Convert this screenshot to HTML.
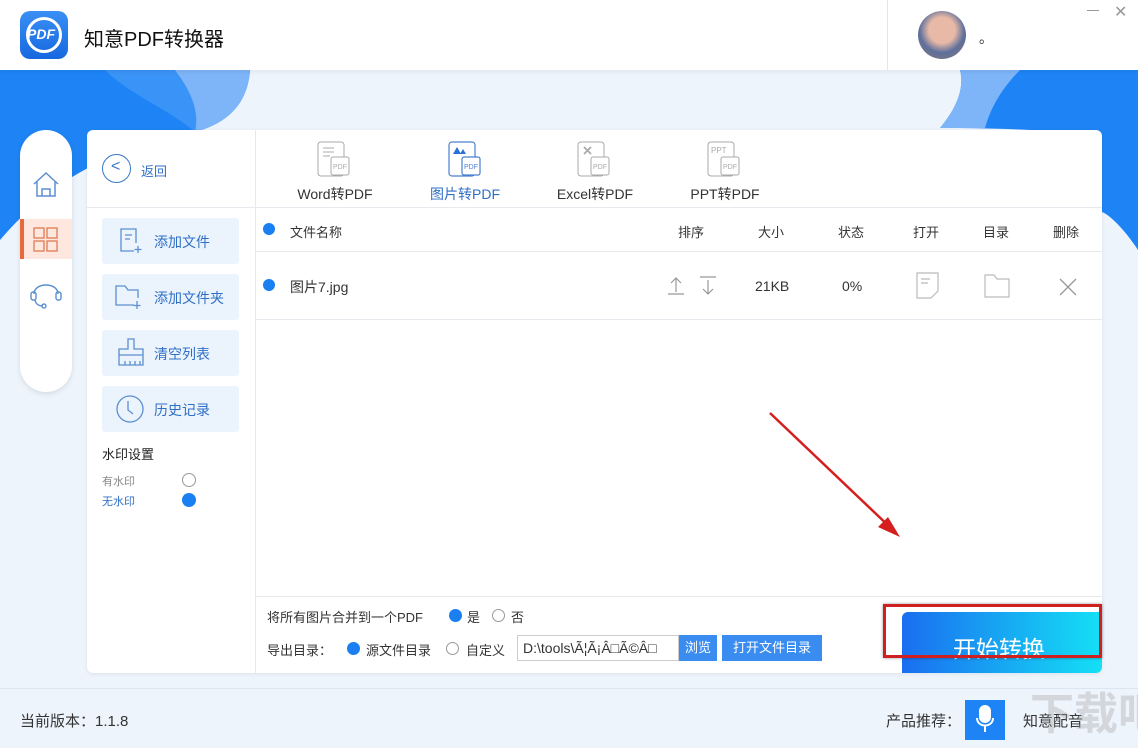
<!DOCTYPE html>
<html><head><meta charset="utf-8"><style>
*{margin:0;padding:0;box-sizing:border-box}
body{width:1138px;height:748px;overflow:hidden;background:#eef4fc;font-family:"Liberation Sans","Noto Sans CJK SC",sans-serif;position:relative;color:#333}
.abs{position:absolute;white-space:nowrap}
.hdr{left:0;top:0;width:1138px;height:70px;background:#fff;box-shadow:0 2px 4px rgba(0,0,0,.06)}
.t{font-size:13px}
.btn{left:102px;width:137px;height:46px;background:#ebf3fd;border-radius:3px;color:#2f6fc4;font-size:14px}
.btn span{position:absolute;left:52px;top:14px}
.dot{width:12px;height:12px;border-radius:50%;background:#1a7ff0}
.ring{width:12px;height:12px;border-radius:50%;border:1px solid #999;background:#fff}
.tab{font-size:14px;color:#333;text-align:center;width:110px}
</style></head><body>
<svg class="abs" style="left:0;top:0" width="1138" height="748">
<path d="M0 70 H250 C248 100 230 125 180 135 C120 150 60 170 0 240 Z" fill="#1e84f5"/>
<path d="M105 70 H250 C248 100 232 122 195 132 C170 110 130 95 105 70Z" fill="#3a93f6"/>
<path d="M175 70 H250 C248 100 232 122 195 132 C200 110 190 90 175 70Z" fill="#7db5f8"/>
<path d="M960 70 H1138 V250 C1125 230 1110 215 1102 212 L1102 140 C1080 130 1000 128 940 128 C955 110 965 90 960 70Z" fill="#1e84f5"/>
<path d="M960 70 H1020 C1000 90 990 110 985 128 H940 C955 110 965 90 960 70Z" fill="#7db5f8"/>
</svg>
<div class="abs hdr"></div>
<div class="abs" style="left:20px;top:11px;width:48px;height:48px;border-radius:10px;background:linear-gradient(#3a8ff5,#1668e0)"></div>
<div class="abs" style="left:26px;top:17px;width:36px;height:36px;border-radius:50%;border:3px solid #fff"></div>
<div class="abs" style="left:27px;top:26px;color:#fff;font-weight:bold;font-style:italic;font-size:14px">PDF</div>
<div class="abs" style="left:84px;top:23px;font-size:20px;color:#111">知意PDF转换器</div>
<div class="abs" style="left:887px;top:0;width:1px;height:70px;background:#e5e5e5"></div>
<div class="abs" style="left:918px;top:11px;width:48px;height:48px;border-radius:50%;background:radial-gradient(circle at 50% 40%,#e7b9a6 0 35%,#5d6f9c 60%,#8d7a6e)"></div>
<div class="abs" style="left:979px;top:28px;font-size:14px">。</div>
<div class="abs" style="left:1087px;top:10px;width:12px;height:1px;background:#999"></div>
<div class="abs" style="left:1114px;top:2px;font-size:16px;color:#999">✕</div>

<div class="abs" style="left:20px;top:130px;width:52px;height:262px;background:#fff;border-radius:26px;box-shadow:0 2px 6px rgba(0,0,0,.1)"></div>
<svg class="abs" style="left:32px;top:170px" width="28" height="28" fill="none" stroke="#5b8fd0" stroke-width="1.5"><path d="M2 14 L14 3 L26 14 M5 12 V26 H23 V12 M10 26 V19 H18 V26"/></svg>
<div class="abs" style="left:20px;top:219px;width:52px;height:40px;background:#fde7de;border-left:4px solid #e86a3c"></div>
<svg class="abs" style="left:33px;top:227px" width="26" height="26" fill="none" stroke="#e07a50" stroke-width="1.3"><rect x="1" y="1" width="10" height="10"/><rect x="14" y="1" width="10" height="10"/><rect x="1" y="14" width="10" height="10"/><rect x="14" y="14" width="10" height="10"/></svg>
<svg class="abs" style="left:30px;top:278px" width="34" height="32" fill="none" stroke="#5b8fd0" stroke-width="1.4"><path d="M4 16 C4 4 28 4 28 16"/><rect x="1" y="14" width="5" height="8" rx="2"/><rect x="26" y="14" width="5" height="8" rx="2"/><path d="M5 22 C6 27 10 28 13 28"/><circle cx="14" cy="28" r="2"/></svg>

<div class="abs" style="left:87px;top:130px;width:1015px;height:543px;background:#fff;border-radius:6px;box-shadow:0 1px 4px rgba(0,0,0,.08)"></div>
<div class="abs" style="left:255px;top:130px;width:1px;height:543px;background:#e6e9ee"></div>
<div class="abs" style="left:87px;top:207px;width:1015px;height:1px;background:#e6e9ee"></div>
<div class="abs" style="left:102px;top:154px;width:29px;height:29px;border-radius:50%;border:1.5px solid #3a78c8"></div>
<div class="abs" style="left:111px;top:158px;color:#3a78c8;font-size:16px">&lt;</div>
<div class="abs" style="left:141px;top:161px;font-size:13px;color:#2f6fc4">返回</div>

<div class="abs btn" style="top:218px"><svg class="abs" style="left:16px;top:9px" width="26" height="28" fill="none" stroke="#5b8fd0" stroke-width="1.3"><path d="M16 24 H3 V2 H18 V16 M7 8 H14 M7 12 H12 M20 19 V26 M16.5 22.5 H23.5"/></svg><span>添加文件</span></div>
<div class="abs btn" style="top:274px"><svg class="abs" style="left:12px;top:9px" width="30" height="28" fill="none" stroke="#5b8fd0" stroke-width="1.3"><path d="M20 22 H2 V3 H11 L14 7 H24 V15 M23 18 V26 M19.5 22.5 H26.5"/></svg><span>添加文件夹</span></div>
<div class="abs btn" style="top:330px"><svg class="abs" style="left:14px;top:7px" width="30" height="32" fill="none" stroke="#5b8fd0" stroke-width="1.3"><path d="M12 2 H18 V12 H27 V28 H3 V12 H12 Z M3 18 H27 M9 28 V24 M14 28 V24 M19 28 V24 M24 28 V24"/></svg><span>清空列表</span></div>
<div class="abs btn" style="top:386px"><svg class="abs" style="left:14px;top:9px" width="30" height="30" fill="none" stroke="#5b8fd0" stroke-width="1.3"><circle cx="14" cy="14" r="13"/><path d="M12 6 V15 L17 19"/></svg><span>历史记录</span></div>
<div class="abs" style="left:102px;top:444px;font-size:13px;color:#222">水印设置</div>
<div class="abs" style="left:102px;top:473px;font-size:11px;color:#888">有水印</div>
<div class="abs ring" style="left:182px;top:473px;width:14px;height:14px"></div>
<div class="abs" style="left:102px;top:493px;font-size:11px;color:#2f6fc4">无水印</div>
<div class="abs dot" style="left:182px;top:493px;width:14px;height:14px"></div>

<svg class="abs" style="left:316px;top:141px" width="40" height="40" fill="none" stroke="#aaa" stroke-width="1"><rect x="2" y="1" width="26" height="34" rx="3"/><rect x="15" y="16" width="18" height="18" rx="2" fill="#fff"/><path d="M7 7 H18 M7 11 H18 M7 15 H14"/><text x="17" y="28" font-size="7" fill="#aaa" stroke="none" font-family="Liberation Sans">PDF</text></svg>
<div class="abs tab" style="left:280px;top:184px">Word转PDF</div>
<svg class="abs" style="left:447px;top:141px" width="40" height="40" fill="none" stroke="#4a7fd0" stroke-width="1.2"><rect x="2" y="1" width="26" height="34" rx="3"/><rect x="15" y="16" width="18" height="18" rx="2" fill="#fff"/><path d="M6 13 L10 6 L14 13 Z M13 13 L16 8 L19 13Z" fill="#2a6fd8" stroke="none"/><text x="17" y="28" font-size="7" fill="#4a7fd0" stroke="none" font-family="Liberation Sans">PDF</text></svg>
<div class="abs tab" style="left:410px;top:184px;color:#2f6fc4">图片转PDF</div>
<svg class="abs" style="left:576px;top:141px" width="40" height="40" fill="none" stroke="#aaa" stroke-width="1"><rect x="2" y="1" width="26" height="34" rx="3"/><rect x="15" y="16" width="18" height="18" rx="2" fill="#fff"/><path d="M8 6 L15 13 M15 6 L8 13" stroke-width="1.8"/><text x="17" y="28" font-size="7" fill="#aaa" stroke="none" font-family="Liberation Sans">PDF</text></svg>
<div class="abs tab" style="left:540px;top:184px">Excel转PDF</div>
<svg class="abs" style="left:706px;top:141px" width="40" height="40" fill="none" stroke="#aaa" stroke-width="1"><rect x="2" y="1" width="26" height="34" rx="3"/><rect x="15" y="16" width="18" height="18" rx="2" fill="#fff"/><text x="5" y="12" font-size="8" fill="#aaa" stroke="none" font-family="Liberation Sans">PPT</text><text x="17" y="28" font-size="7" fill="#aaa" stroke="none" font-family="Liberation Sans">PDF</text></svg>
<div class="abs tab" style="left:670px;top:184px">PPT转PDF</div>

<div class="abs" style="left:255px;top:251px;width:847px;height:1px;background:#e6e9ee"></div>
<div class="abs" style="left:255px;top:319px;width:847px;height:1px;background:#e6e9ee"></div>
<div class="abs dot" style="left:263px;top:223px"></div>
<div class="abs t" style="left:290px;top:222px">文件名称</div>
<div class="abs t" style="left:678px;top:222px">排序</div>
<div class="abs t" style="left:758px;top:222px">大小</div>
<div class="abs t" style="left:838px;top:222px">状态</div>
<div class="abs t" style="left:913px;top:222px">打开</div>
<div class="abs t" style="left:983px;top:222px">目录</div>
<div class="abs t" style="left:1053px;top:222px">删除</div>
<div class="abs dot" style="left:263px;top:279px"></div>
<div class="abs" style="left:290px;top:277px;font-size:14px">图片7.jpg</div>
<svg class="abs" style="left:665px;top:275px" width="55" height="22" fill="none" stroke="#999" stroke-width="1.2"><path d="M11 3 V17 M6 8 L11 3 L16 8 M3 19 H19 M43 5 V19 M38 14 L43 19 L48 14 M35 2 H51"/></svg>
<div class="abs" style="left:755px;top:278px;font-size:14px">21KB</div>
<div class="abs" style="left:842px;top:278px;font-size:14px">0%</div>
<svg class="abs" style="left:914px;top:271px" width="28" height="30" fill="none" stroke="#bbb" stroke-width="1.2"><path d="M3 2 H24 V20 L17 27 H3 Z M7 8 H16 M7 12 H14"/></svg>
<svg class="abs" style="left:983px;top:273px" width="30" height="26" fill="none" stroke="#bbb" stroke-width="1.2"><path d="M2 24 V2 H11 L14 6 H26 V24 Z"/></svg>
<svg class="abs" style="left:1058px;top:277px" width="20" height="20" fill="none" stroke="#999" stroke-width="1.3"><path d="M2 2 L18 18 M18 2 L2 18"/></svg>

<svg class="abs" style="left:760px;top:405px" width="150" height="140"><path d="M10 8 L134 126" stroke="#d51f1f" stroke-width="2.5"/><path d="M140 132 L118 122 L128 112 Z" fill="#d51f1f"/></svg>

<div class="abs" style="left:255px;top:596px;width:847px;height:1px;background:#e6e9ee"></div>
<div class="abs t" style="left:267px;top:607px">将所有图片合并到一个PDF</div>
<div class="abs dot" style="left:449px;top:609px;width:13px;height:13px"></div>
<div class="abs t" style="left:467px;top:607px">是</div>
<div class="abs ring" style="left:492px;top:609px;width:13px;height:13px"></div>
<div class="abs t" style="left:511px;top:607px">否</div>
<div class="abs t" style="left:267px;top:640px">导出目录：</div>
<div class="abs dot" style="left:347px;top:642px;width:13px;height:13px"></div>
<div class="abs t" style="left:366px;top:640px">源文件目录</div>
<div class="abs ring" style="left:446px;top:642px;width:13px;height:13px"></div>
<div class="abs t" style="left:466px;top:640px">自定义</div>
<div class="abs" style="left:517px;top:635px;width:162px;height:26px;border:1px solid #ccc;background:#fff;font-size:14px;padding:4px 5px;overflow:hidden">D:\tools\Ã¦Ã¡Â□Ã©Â□</div>
<div class="abs" style="left:679px;top:635px;width:38px;height:26px;background:#3a8cf0;color:#fff;font-size:13px;text-align:center;line-height:26px">浏览</div>
<div class="abs" style="left:722px;top:635px;width:100px;height:26px;background:#3a8cf0;color:#fff;font-size:13px;text-align:center;line-height:26px">打开文件目录</div>
<div class="abs" style="left:902px;top:612px;width:200px;height:61px;border-radius:6px 0 6px 0;background:linear-gradient(90deg,#1a6ef0,#14e0f5)"></div>
<div class="abs" style="left:953px;top:630px;color:#fff;font-size:23px">开始转换</div>
<div class="abs" style="left:883px;top:604px;width:219px;height:54px;border:3px solid #d01f1f;box-shadow:0 0 3px rgba(0,0,0,.4)"></div>

<div class="abs" style="left:0;top:688px;width:1138px;height:1px;background:#dde6f0"></div>
<div class="abs" style="left:20px;top:710px;font-size:15px">当前版本：1.1.8</div>
<div class="abs" style="left:886px;top:710px;font-size:15px">产品推荐：</div>
<div class="abs" style="left:965px;top:700px;width:40px;height:40px;background:#1e84f5"></div>
<svg class="abs" style="left:975px;top:704px" width="20" height="30" fill="none" stroke="#fff" stroke-width="2"><rect x="5" y="2" width="10" height="16" rx="5" fill="#fff"/><path d="M2 14 C2 24 18 24 18 14 M10 22 V28"/></svg>
<div class="abs" style="left:1023px;top:710px;font-size:15px">知意配音</div>
<div class="abs" style="left:1030px;top:690px;font-size:44px;line-height:50px;color:rgba(160,160,160,.35);font-weight:bold">下载吧</div>
</body></html>
